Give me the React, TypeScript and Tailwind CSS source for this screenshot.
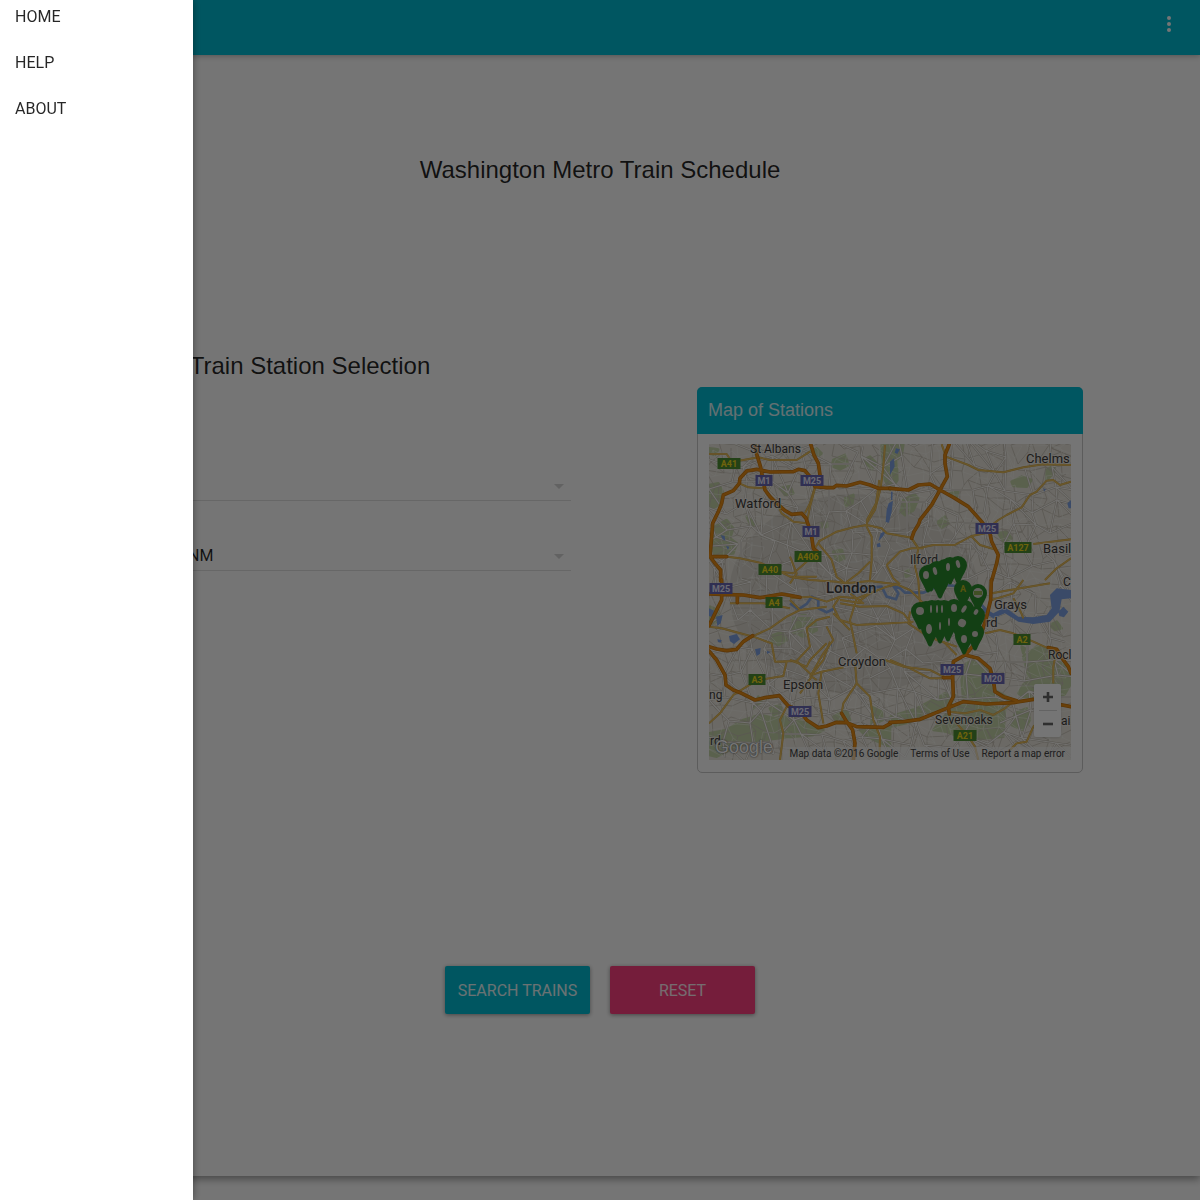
import React from "react";

type Pt = [number, number];

function streetNetwork(cols: number, rows: number, seed: number): string {
  let s = seed;
  const rnd = () => {
    s = (s * 16807) % 2147483647;
    return s / 2147483647;
  };
  const pts: Pt[][] = [];
  for (let r = 0; r <= rows; r++) {
    const row: Pt[] = [];
    for (let c = 0; c <= cols; c++) {
      row.push([
        Math.round(((c + (rnd() - 0.5) * 0.9) * 362) / cols),
        Math.round(((r + (rnd() - 0.5) * 0.9) * 316) / rows),
      ]);
    }
    pts.push(row);
  }
  let d = "";
  for (let r = 0; r < rows; r++) {
    for (let c = 0; c < cols; c++) {
      const [x, y] = pts[r][c];
      const k = rnd();
      if (k < 0.75) d += `M${x} ${y}L${pts[r][c + 1][0]} ${pts[r][c + 1][1]}`;
      if (k > 0.2) d += `M${x} ${y}L${pts[r + 1][c][0]} ${pts[r + 1][c][1]}`;
      if (k > 0.4 && k < 0.65) d += `M${x} ${y}L${pts[r + 1][c + 1][0]} ${pts[r + 1][c + 1][1]}`;
    }
  }
  return d;
}

const lanes = streetNetwork(26, 23, 77);
const streets = streetNetwork(34, 30, 1234);
const avenues = streetNetwork(18, 15, 991);

/* The map is drawn in tiles, each in its own triple-size coordinates. */
const tiles = [
  {
    at: "translate(-19 -64) scale(.3333)",
    parks:
      "M57 315L85 310L98 335L90 370L70 385L57 380ZM75 440L110 420L130 445L120 475L140 490L130 520L75 525L65 500ZM360 215L380 205L395 220L375 235ZM430 240L465 225L475 255L450 268L425 258ZM465 355L490 345L487 370L468 378ZM430 515L455 510L462 535L440 545ZM57 205L85 208L75 225L57 220ZM520 240L540 230L560 250L545 268ZM575 195L600 195L600 330L585 300L578 250ZM170 410L195 430L185 440ZM270 325L300 318L310 340L285 345Z",
    water:
      "M92 465L104 468L106 482L98 478ZM108 498L118 500L114 510Z",
    yellow:
      "M57 222L110 222L125 245L160 240L205 232L240 240L320 240L360 215M148 310L175 322L220 325M262 372L275 400L310 425L350 430M110 530L150 535L210 548L270 575L310 580L350 545L390 480M375 320L360 370L345 400M585 195L580 260L572 325L555 390L530 430M270 575L300 590L380 590",
    motor:
      "M195 192L200 222L212 262L225 330L240 350L262 372L285 392L305 403L335 400L348 415L355 435L365 470L370 505L382 515M92 602L92 570L75 550L60 530L65 470L68 430L85 395L95 370L100 345L130 332L148 310L150 295L170 273L200 268L240 276L310 275L325 268L345 272L360 290L375 320M362 192L372 225L385 250L390 285L375 320L410 323L430 323L440 316L470 318L510 307L540 315L565 325L602 325M60 530L110 530",
  },
  {
    at: "translate(181 -64) scale(.3333)",
    parks:
      "M0 193L40 193L35 225L20 240L22 300L10 320L0 310ZM40 365L75 345L85 355L70 390L45 405L32 395ZM145 425L165 410L175 430L155 442ZM365 305L395 290L425 300L410 320L370 318ZM470 270L495 255L490 280L470 300ZM180 340L205 335L200 352ZM325 460L350 455L365 475L340 485Z",
    water: "M0 245L12 235L14 260L0 285ZM18 205L30 208L22 222L14 218ZM532 370L543 360L543 385L536 385ZM460 325L468 328L462 335Z",
    yellow:
      "M155 193L168 230L235 255L265 270L340 277L400 262L460 253L543 255M543 305L510 315L490 300L470 302L440 335L420 345L395 382L350 405L325 420L300 440M65 475L85 505L130 495L195 495L245 468L285 460M245 470L270 495L320 510M430 492L543 478M543 535L500 565L465 600",
    motor:
      "M0 325L55 330L85 315L120 312L150 330L190 352L235 380L275 425L300 460L305 485L325 525L320 550L305 602M178 192L165 225L165 250L172 290L150 330L125 375L90 420L86 432L72 455L65 475",
  },
  {
    at: "translate(-19 136) scale(.3333)",
    parks:
      "M57 460L110 450L160 420L210 405L255 415L290 405L340 425L400 450L370 465L310 470L220 480L140 500L80 530L57 525ZM310 115L340 105L375 130L380 150L340 170L310 155ZM248 165L275 155L290 180L265 195L245 185ZM430 410L470 390L480 420L440 425ZM545 380L575 395L578 420L545 435ZM240 385L270 375L275 395L250 405ZM60 80L85 90L90 120L60 135ZM205 350L215 365L190 385ZM590 440L600 440L600 500L530 470L510 450Z",
    water:
      "M57 85L72 92L68 112L57 108ZM78 110L98 105L92 130L82 138ZM117 168L140 162L150 178L132 192L120 184ZM195 208L212 204L210 222L200 228ZM82 178L95 180L92 188L84 186ZM230 212L242 216L232 222Z",
    yellow:
      "M57 430L90 400L130 345L170 320L205 300L280 288L290 245L255 245L245 190L190 170L95 145L57 140M255 245L320 243L365 285L395 275L460 262M320 243L360 200L350 145L380 120L420 110M190 168L240 145L290 110L330 90L300 60M330 90L410 80M500 310L460 370L455 400M500 310L540 350L550 420L570 470L568 540M500 310L495 250M395 275L385 340L400 430M290 380L270 420L280 460L270 540M365 285L400 240L420 185M330 340L365 290L380 300M120 70L220 70L300 85",
    motor:
      "M57 42L95 43L160 45L210 53L275 42L310 48L330 52M142 45L142 68M95 0L95 60L75 100L57 137M57 200L80 207L110 212L140 208L160 185L188 167M57 213L80 240L105 285L108 315L130 330L155 340L195 360L225 353L268 347L295 378L330 392L350 420L385 443L410 438L440 427L470 428L500 440L580 442L602 430M455 400L470 425L488 450L495 490L490 540",
  },
  {
    at: "translate(181 136) scale(.3333)",
    parks:
      "M230 250L260 238L300 280L305 325L350 350L380 365L220 362L215 300ZM400 230L440 200L480 205L490 235L530 260L543 310L520 350L400 350L385 340L415 290ZM0 410L80 385L165 340L195 345L180 380L90 420L0 440ZM190 375L290 378L345 385L340 470L230 480L170 455L130 450ZM375 400L410 385L420 420L400 450L365 435ZM480 135L500 125L515 145L495 150ZM395 200L405 205L400 220Z",
    water:
      "M278 82L310 100L345 82L385 110L430 112L470 105L485 85L480 45L500 25L543 30L543 55L515 58L508 95L480 125L430 132L385 125L345 100L310 115L278 95ZM505 95L520 80L535 95L522 112L508 108Z",
    yellow:
      "M160 185L200 225M0 240L60 265L120 295L165 295M175 395L225 400L270 390L310 405L345 385L375 360M200 430L235 470L255 500L265 540M285 160L330 150L370 160L430 185L475 205M370 55L390 90L400 115M500 210L490 260L490 310M430 440L410 485L380 490M430 440L470 400M305 60L370 40L400 0M305 40L360 30L480 10M380 490L350 520",
    motor:
      "M304 0L302 60L290 110L270 175L225 225L190 245L188 290L190 350L175 380L178 402M160 293L188 293M0 427L40 425L90 418L170 385L220 365L290 372L370 368L430 358L490 370L543 380M225 225L265 235L300 265L310 300L315 335L340 350L380 362M475 203L500 208L520 240L535 260L543 280",
  },
  {
    at: "translate(81 36) scale(.3333)",
    parks:
      "M165 60L190 50L185 70L168 78ZM130 215L155 210L162 235L140 242ZM10 415L45 405L75 425L80 450L40 470L8 455ZM340 60L370 45L385 55L370 90L345 105ZM445 130L468 115L475 130L455 142ZM95 130L110 125L112 140L98 142ZM345 275L355 270L360 285L348 290Z",
    water:
      "M303 35L308 35L307 60L303 60ZM296 70L309 62L305 95L297 128L287 126L290 90ZM272 160L288 152L280 168L265 184ZM260 192L270 188L272 200L262 202ZM120 490L126 486L124 502Z",
    yellow:
      "M75 25L60 80L50 130M268 0L258 70L232 118L230 140L245 170L245 240L240 300M85 185L140 155L190 142L230 135L275 145L290 160L365 173M85 190L125 240L140 290L165 310M0 290L60 300L140 305L165 310L240 303L320 313L360 330L400 370M165 310L205 280L240 245M290 255L330 215L365 205L400 205M365 175L385 205L375 260L385 300L390 370M290 255L310 295L330 313M0 355L60 350L110 365L150 350L200 355L240 340L290 320L320 313M150 350L130 380L150 420L200 435L300 430L370 425M200 355L180 420L190 470L200 520M150 370L210 380L290 378L340 400L365 430M130 400L180 450M110 440L130 480L100 520L60 590M0 540L50 560L60 540L110 490M200 370L240 340M180 340L220 370L150 360M0 230L20 280L0 310M285 540L340 560L420 570L460 590M360 395L355 430L400 460L440 480L500 500",
    motor: "",
  },
];

const thames =
  "M0 370L25 388L50 372L65 350L85 360L85 385L110 397L135 385M185 345L210 325L275 320L290 350L318 358L325 340L310 318L330 325L345 338L400 338L430 325L465 315L520 320L560 360L600 400";

const places: { t: string; x: number; y: number; s?: number; b?: boolean }[] = [
  { t: "St Albans", x: 41, y: 9 },
  { t: "Chelms", x: 317, y: 19, s: 13 },
  { t: "Watford", x: 26, y: 64, s: 13 },
  { t: "Ilford", x: 201, y: 120 },
  { t: "Basil", x: 334, y: 109, s: 13 },
  { t: "London", x: 117, y: 149, s: 15, b: true },
  { t: "Grays", x: 285, y: 165, s: 13 },
  { t: "rd", x: 277, y: 183, s: 13 },
  { t: "Croydon", x: 129, y: 222, s: 13 },
  { t: "Epsom", x: 74, y: 245, s: 13 },
  { t: "C", x: 354, y: 142 },
  { t: "Rocl", x: 339, y: 215 },
  { t: "Sevenoaks", x: 226, y: 280 },
  { t: "ai", x: 352, y: 281 },
  { t: "ng", x: 0, y: 255, s: 12 },
  { t: "rd", x: 1, y: 301, s: 12 },
];

const shields: { t: string; x: number; y: number }[] = [
  { t: "A41", x: 20, y: 19 },
  { t: "M1", x: 55, y: 36 },
  { t: "M25", x: 103, y: 36 },
  { t: "M1", x: 102, y: 87 },
  { t: "A406", x: 99, y: 112 },
  { t: "A40", x: 61, y: 125 },
  { t: "M25", x: 278, y: 84 },
  { t: "A127", x: 309, y: 103 },
  { t: "M25", x: 12, y: 144 },
  { t: "A4", x: 65, y: 158 },
  { t: "A3", x: 48, y: 235 },
  { t: "M25", x: 91, y: 267 },
  { t: "M25", x: 243, y: 225 },
  { t: "M20", x: 284, y: 234 },
  { t: "A2", x: 313, y: 195 },
  { t: "A21", x: 256, y: 291 },
];

/* Heads of the station pins. */
const pins: Pt[] = [
  [219, 130], [222, 129], [231, 136], [228, 126], [236, 124], [241, 122], [249, 121],
  [254, 145], [269, 149],
  [211, 167], [217, 166], [223, 165], [229, 165], [235, 165], [245, 164], [256, 165], [267, 171],
  [221, 184], [231, 181], [239, 179], [248, 174], [262, 177], [255, 192], [266, 188],
];

/* Where the map shows through the rings of the crowded pins. */
const rings: { x: number; y: number; rx: number; ry: number; r?: number }[] = [
  { x: 217, y: 131, rx: 3, ry: 4 },
  { x: 226, y: 127, rx: 2, ry: 4, r: -15 },
  { x: 239, y: 123, rx: 2, ry: 4 },
  { x: 249, y: 120, rx: 2, ry: 4, r: -15 },
  { x: 211, y: 167, rx: 4, ry: 4 },
  { x: 222, y: 165, rx: 1, ry: 4 },
  { x: 228, y: 165, rx: 1, ry: 4 },
  { x: 233, y: 165, rx: 1, ry: 4 },
  { x: 245, y: 164, rx: 3, ry: 4 },
  { x: 255, y: 165, rx: 2, ry: 4, r: 30 },
  { x: 267, y: 168, rx: 2, ry: 3, r: 30 },
  { x: 220, y: 185, rx: 3, ry: 5 },
  { x: 231, y: 182, rx: 1, ry: 4 },
  { x: 240, y: 178, rx: 1, ry: 4 },
  { x: 253, y: 179, rx: 4, ry: 4, r: 30 },
  { x: 255, y: 195, rx: 3, ry: 4 },
  { x: 266, y: 190, rx: 3, ry: 3 },
  { x: 269, y: 149, rx: 5, ry: 5 },
];

function StationMap() {
  return (
    <svg
      viewBox="0 0 362 316"
      preserveAspectRatio="xMidYMid slice"
      className="block h-[316px] w-full font-['Roboto',sans-serif]"
      role="img"
      aria-label="Map of stations around London"
    >
      <rect width="362" height="316" fill="#e9e5dc" />
      <ellipse cx="145" cy="150" rx="125" ry="100" fill="#dad6ce" />
      {tiles.map((t) => (
        <path key={t.at} d={t.parks} transform={t.at} fill="#c4d3a8" strokeLinejoin="round" stroke="#c4d3a8" strokeWidth="8" />
      ))}
      <path d={lanes} fill="none" stroke="#c4beb2" strokeWidth="0.8" />
      <path d={streets} fill="none" stroke="#f5f3ee" strokeWidth="0.7" opacity="0.65" />
      <path d={avenues} fill="none" stroke="#bdb7ab" strokeWidth="2" />
      <path d={avenues} fill="none" stroke="#f6f4f0" strokeWidth="1.1" />
      <path d={thames} transform="translate(81 36) scale(.3333)" fill="none" stroke="#86a6dc" strokeWidth="8" strokeLinejoin="round" />
      {tiles.map((t) => (
        <g key={t.at} transform={t.at} fill="none" strokeLinejoin="round">
          <path d={t.water} fill="#7fa2e2" />
          <path d={t.yellow} stroke="#c9a350" strokeWidth="6" />
          <path d={t.yellow} stroke="#e6bd5c" strokeWidth="4" />
        </g>
      ))}
      {tiles.map((t) => (
        <g key={t.at} transform={t.at} fill="none" strokeLinejoin="round" strokeLinecap="round">
          <path d={t.motor} stroke="#c47412" strokeWidth="11" />
          <path d={t.motor} stroke="#e68c14" strokeWidth="7" />
        </g>
      ))}
      {places.map((p) => (
        <text
          key={`${p.t}${p.x}`}
          x={p.x}
          y={p.y}
          fontSize={p.s ?? 12}
          fontWeight={p.b ? 500 : 400}
          fill="#3f3d3b"
          stroke="#f4f2ee"
          strokeWidth="2"
          strokeOpacity="0.6"
          paintOrder="stroke"
        >
          {p.t}
        </text>
      ))}
      {shields.map((s) => {
        const w = s.t.length === 2 ? 17 : s.t.length === 3 ? 23 : 27;
        const motorway = s.t[0] === "M";
        return (
          <g key={`${s.x}-${s.y}`}>
            <rect x={s.x - w / 2} y={s.y - 5} width={w} height="11" fill={motorway ? "#6a68b4" : "#4c8f33"} />
            <text x={s.x} y={s.y + 4} textAnchor="middle" fontSize="9" fontWeight="700" fill={motorway ? "#e6e4f6" : "#f0d81c"}>
              {s.t}
            </text>
          </g>
        );
      })}
      {pins.map(([x, y]) => (
        <path
          key={`${x}-${y}`}
          transform={`translate(${x} ${y})`}
          d="M0-9A9 9 0 0 1 9 0C9 5 4 11 2 17Q0 20-2 17C-4 11-9 5-9 0A9 9 0 0 1 0-9Z"
          fill="#2b8a2d"
        />
      ))}
      {rings.map((r) => (
        <ellipse key={`${r.x}-${r.y}`} cx={r.x} cy={r.y} rx={r.rx} ry={r.ry} transform={`rotate(${r.r ?? 0} ${r.x} ${r.y})`} fill="#d3cfc6" />
      ))}
      <path d="M265 147L273 147L273 151L265 151Z" fill="#8fae52" />
      <text x="251" y="148" fontSize="9" fontWeight="700" fill="#c0b71f">
        A
      </text>
    </svg>
  );
}

function StationSelect({ label, value }: { label: string; value: string }) {
  return (
    <div className="relative">
      <select
        aria-label={label}
        defaultValue={value}
        className="block h-[30px] w-full appearance-none border-b border-[#e0e0e0] bg-transparent pl-[139px] font-['Roboto',sans-serif] text-base text-black/85 outline-none"
      >
        <option value={value}>{value}</option>
      </select>
      <svg viewBox="0 0 10 5" className="pointer-events-none absolute top-[13px] right-[7px] h-[5px] w-[10px]" aria-hidden="true">
        <path d="M0 0H10L5 5Z" fill="#d6d6d6" />
      </svg>
    </div>
  );
}

export default function App() {
  return (
    <div className="relative min-h-screen bg-white font-['Liberation_Sans',sans-serif] text-black/85">
      <div className="flex min-h-[1176px] flex-col bg-white shadow-[0_3px_8px_rgba(0,0,0,0.4)]">
        <header className="flex h-[55px] items-start justify-end bg-[#00bcd4] px-5 pt-3 shadow-[0_1px_6px_rgba(0,0,0,0.3)]">
          <button type="button" aria-label="More options" className="flex h-6 w-6 items-center justify-center text-white">
            <svg viewBox="0 0 24 24" className="h-6 w-6" fill="currentColor" aria-hidden="true">
              <circle cx="13" cy="6" r="2" />
              <circle cx="13" cy="12" r="2" />
              <circle cx="13" cy="18" r="2" />
            </svg>
          </button>
        </header>

        <main className="flex grow flex-col px-5">
          <h1 className="mt-[99px] text-center text-2xl">Washington Metro Train Schedule</h1>

          <div className="mt-[164px] grid grid-cols-2">
            <section className="flex flex-col items-center">
              <h2 className="text-2xl">Train Station Selection</h2>
              <form className="mt-[89px] flex w-[90%] flex-col gap-10">
                <StationSelect label="From station" value="" />
                <StationSelect label="To station" value="NM" />
              </form>
            </section>

            <section className="mx-auto mt-[37px] w-[386px] rounded-[5px] border border-[#c8c8c8]">
              <h2 className="-mx-px -mt-px rounded-t-[5px] bg-[#00bcd4] px-[11px] text-lg leading-[47px] text-white/85">Map of Stations</h2>
              <div className="relative mx-[11px] mt-[10px] mb-3 overflow-hidden">
                <StationMap />
                <div className="absolute right-[10px] bottom-[23px] flex w-[27px] flex-col items-center rounded-xs bg-white text-[#666] shadow">
                  <button type="button" aria-label="Zoom in" className="flex h-[26px] w-full items-center justify-center">
                    <svg viewBox="0 0 10 10" className="h-[10px] w-[10px]" stroke="currentColor" strokeWidth="2.6" aria-hidden="true">
                      <path d="M5 0V10M0 5H10" />
                    </svg>
                  </button>
                  <span className="h-px w-[18px] bg-[#d8d8d8]" />
                  <button type="button" aria-label="Zoom out" className="flex h-[26px] w-full items-center justify-center">
                    <svg viewBox="0 0 10 10" className="h-[10px] w-[10px]" stroke="currentColor" strokeWidth="2.6" aria-hidden="true">
                      <path d="M0 5H10" />
                    </svg>
                  </button>
                </div>
                <span className="absolute bottom-px left-[6px] text-lg leading-6 text-white [text-shadow:0_0_2px_#666,0_0_1px_#666]">Google</span>
                <div className="absolute right-0 bottom-0 flex h-[13px] items-center gap-3 bg-[#f5f5f5]/60 px-[6px] font-['Roboto',sans-serif] text-[10px] leading-[13px] whitespace-nowrap text-[#444]">
                  <span>Map data ©2016 Google</span>
                  <a href="#terms">Terms of Use</a>
                  <a href="#report">Report a map error</a>
                </div>
              </div>
            </section>
          </div>

          <div className="mt-[193px] flex justify-center gap-5 font-['Roboto',sans-serif] text-base text-white/90">
            <button type="button" className="h-12 w-[145px] rounded-xs bg-[#00bcd4] pt-0.5 shadow-[0_1px_4px_rgba(0,0,0,0.4)]">
              SEARCH TRAINS
            </button>
            <button type="button" className="h-12 w-[145px] rounded-xs bg-[#ff4081] pt-0.5 shadow-[0_1px_4px_rgba(0,0,0,0.4)]">
              RESET
            </button>
          </div>
        </main>
      </div>

      <div className="fixed inset-0 bg-black/54" />

      <nav className="fixed inset-y-0 left-0 flex w-[193px] flex-col gap-3 bg-white px-[15px] font-['Roboto',sans-serif] text-base leading-[34px] text-black/85 shadow-[0_0_8px_rgba(0,0,0,0.4)]">
        <a href="#home">HOME</a>
        <a href="#help">HELP</a>
        <a href="#about">ABOUT</a>
      </nav>
    </div>
  );
}
